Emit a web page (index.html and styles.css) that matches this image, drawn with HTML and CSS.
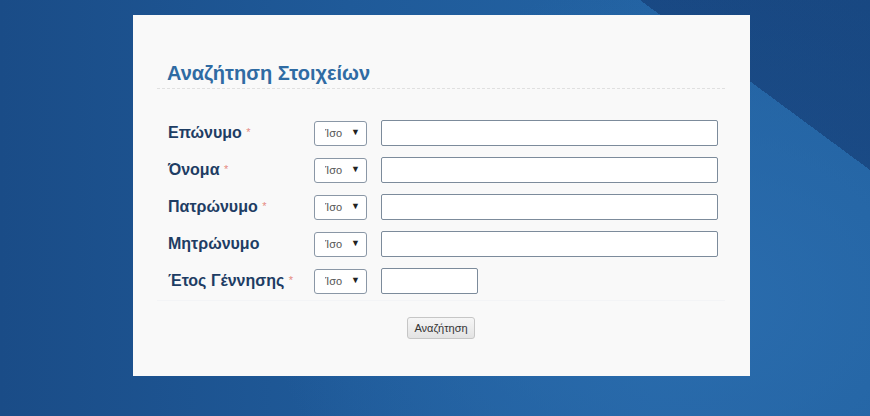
FILE: index.html
```html
<!DOCTYPE html>
<html lang="el">
<head>
  <meta charset="UTF-8" />
  <meta name="viewport" content="width=device-width, initial-scale=1.0"/>
  <title>Αναζήτηση Στοιχείων</title>
  <link rel="stylesheet" href="styles.css">
</head>
<body>
  <main class="card">
    <h1 class="card-title">Αναζήτηση Στοιχείων</h1>

    <form class="search-form">
      <div class="rows">
        <div class="row">
          <label class="label" for="surname">Επώνυμο <span class="req">*</span></label>
          <span class="select-wrap">
            <select class="op"><option>Ίσο</option></select>
          </span>
          <input type="text" id="surname" class="field" />
        </div>
        <div class="row">
          <label class="label" for="name">Όνομα <span class="req">*</span></label>
          <span class="select-wrap">
            <select class="op"><option>Ίσο</option></select>
          </span>
          <input type="text" id="name" class="field" />
        </div>
        <div class="row">
          <label class="label" for="father">Πατρώνυμο <span class="req">*</span></label>
          <span class="select-wrap">
            <select class="op"><option>Ίσο</option></select>
          </span>
          <input type="text" id="father" class="field" />
        </div>
        <div class="row">
          <label class="label" for="mother">Μητρώνυμο</label>
          <span class="select-wrap">
            <select class="op"><option>Ίσο</option></select>
          </span>
          <input type="text" id="mother" class="field" />
        </div>
        <div class="row">
          <label class="label" for="year">Έτος Γέννησης <span class="req">*</span></label>
          <span class="select-wrap">
            <select class="op"><option>Ίσο</option></select>
          </span>
          <input type="text" id="year" class="field field-short" />
        </div>
      </div>

      <div class="actions">
        <button type="submit" class="search-btn">Αναζήτηση</button>
      </div>
    </form>
  </main>
</body>
</html>
```

FILE: styles.css
```css
html, body {
  height: 100%;
}

body {
  margin: 0;
  padding: 15px 0 0 133px;
  box-sizing: border-box;
  font-family: "Liberation Sans", Arial, sans-serif;
  background:
    linear-gradient(to bottom left, rgba(12, 40, 92, 0.45) 50%, transparent 50%) top right / 230px 170px no-repeat,
    radial-gradient(ellipse 420px 320px at 690px 300px, #2a6cad 0%, rgba(42, 108, 173, 0) 100%),
    linear-gradient(to right, #1a4c87 0%, #1f5a99 40%, #2363a3 75%, #2262a1 100%);
}

.card {
  width: 617px;
  height: 361px;
  box-sizing: border-box;
  background: #f9f9f9;
  padding: 46px 25px 0 24px;
}

.card-title {
  margin: 0;
  padding: 0 0 3px 10px;
  font-size: 20px;
  line-height: 24px;
  font-weight: bold;
  color: #2f6ba3;
  border-bottom: 1px dashed #e0e0e0;
}

.search-form {
  margin: 0;
}

.rows {
  display: flex;
  flex-direction: column;
  gap: 11px;
  padding: 31px 0 6px 11px;
  border-bottom: 1px solid #f3f4f6;
}

.row {
  display: flex;
  align-items: center;
  height: 26px;
}

.label {
  width: 146px;
  font-size: 16px;
  font-weight: bold;
  color: #1e3d64;
}

.req {
  color: #e58a80;
  font-size: 11px;
  font-weight: normal;
  vertical-align: 2px;
}

.select-wrap {
  position: relative;
  display: inline-block;
  margin-right: 14px;
}

.select-wrap::after {
  content: "▼";
  position: absolute;
  right: 7px;
  top: 6px;
  font-size: 9px;
  color: #222;
  pointer-events: none;
}

.op {
  appearance: none;
  -webkit-appearance: none;
  width: 53px;
  height: 25px;
  margin: 0;
  padding: 0 0 0 10px;
  font-family: "Liberation Sans", Arial, sans-serif;
  font-size: 11px;
  color: #555;
  background: #fff;
  border: 1px solid #8a97a6;
  border-radius: 3px;
}

.field {
  width: 337px;
  height: 26px;
  box-sizing: border-box;
  margin: 0;
  padding: 2px 6px;
  font-family: "Liberation Sans", Arial, sans-serif;
  font-size: 13px;
  background: #fff;
  border: 1px solid #7c8b9b;
  border-radius: 2px;
}

.field-short {
  width: 97px;
}

.actions {
  display: flex;
  justify-content: center;
  padding-top: 16px;
}

.search-btn {
  width: 68px;
  height: 22px;
  padding: 0;
  font-family: "Liberation Sans", Arial, sans-serif;
  font-size: 11px;
  color: #333;
  background: linear-gradient(#f6f6f6, #e3e3e3);
  border: 1px solid #c6c6c6;
  border-radius: 3px;
  cursor: pointer;
}
```
